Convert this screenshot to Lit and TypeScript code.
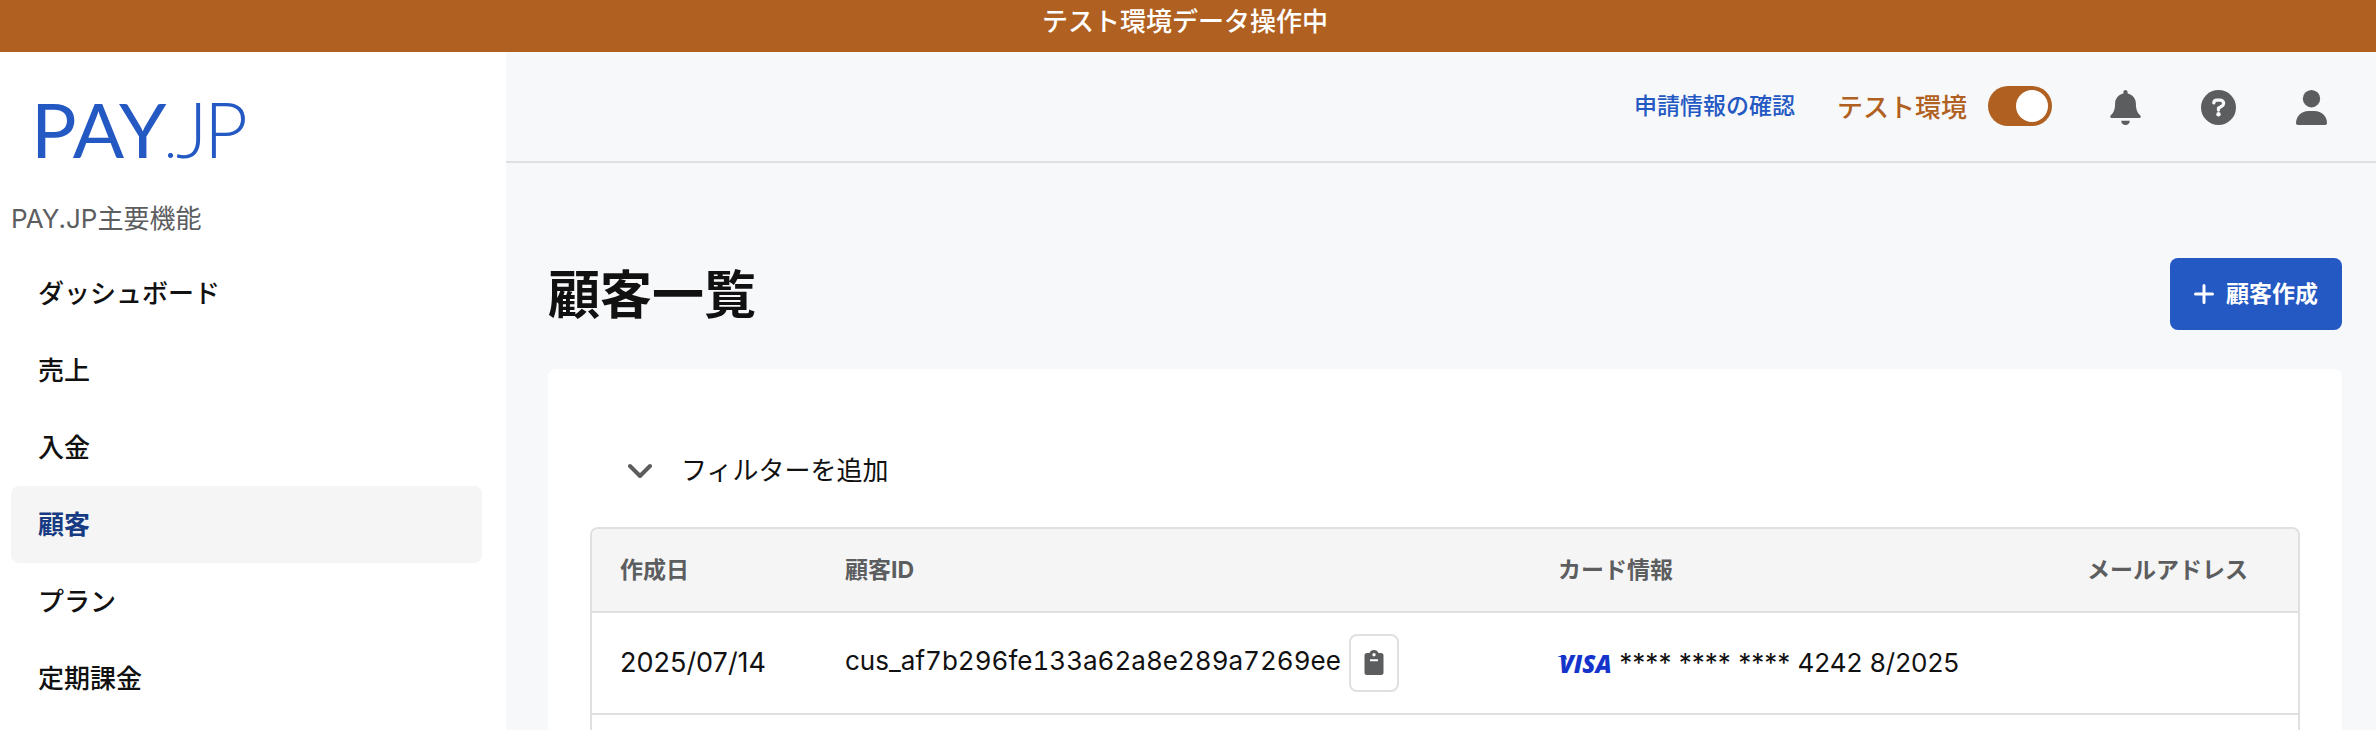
import { LitElement, html, css, svg } from "lit";
import { customElement, state } from "lit/decorators.js";
import { classMap } from "lit/directives/class-map.js";

interface Customer {
  created: string;
  id: string;
  card: string;
  email: string;
}

const NAV_ITEMS = ["ダッシュボード", "売上", "入金", "顧客", "プラン", "定期課金"];

const CUSTOMERS: Customer[] = [
  {
    created: "2025/07/14",
    id: "cus_af7b296fe133a62a8e289a7269ee",
    card: "**** **** **** 4242 8/2025",
    email: "",
  },
];

const bellIcon = svg`
  <svg class="icon" viewBox="0 0 35 35" aria-hidden="true">
    <path d="M17.5 0C16.3 0 15.4 1 15.4 2.2V3.5C10.6 4.5 7.1 8.600 7.100 13.600C7.100 19.500 5.800 22.500 2.700 25.600C1.700 26.700 2.300 28 3.700 28H31.300C32.700 28 33.300 26.700 32.300 25.600C29.200 22.500 27.900 19.500 27.900 13.600C27.900 8.600 24.400 4.500 19.600 3.500V2.200C19.600 1 18.700 0 17.500 0Z"/>
    <path d="M13.200 30.700H21.800C21.800 33.200 19.900 35 17.500 35S13.200 33.200 13.200 30.700Z"/>
  </svg>`;

const helpIcon = svg`
  <svg class="icon" viewBox="0 0 35 35" aria-hidden="true">
    <circle cx="17.500" cy="17.500" r="17.500"/>
    <path d="M12.800 12.900C12.900 11 14.300 10.200 16 10.200H18.800C21 10.200 22.600 11.500 22.600 13.300C22.600 14.800 21.700 15.700 20.500 16.400L17.500 18.200V20" fill="none" stroke="#f7f8fa" stroke-width="3.300" stroke-linecap="round" stroke-linejoin="round"/>
    <circle cx="17.500" cy="24.300" r="2.200" fill="#f7f8fa"/>
  </svg>`;

const userIcon = svg`
  <svg class="icon" viewBox="0 0 35 35" aria-hidden="true">
    <circle cx="17.500" cy="8.700" r="8.700"/>
    <path d="M14.500 20.900H20.500C27.500 20.900 33 26 33 33C33 34.200 32.200 35 31 35H4C2.800 35 2 34.200 2 33C2 26 7.500 20.900 14.500 20.900Z"/>
  </svg>`;

@customElement("app-root")
export class AppRoot extends LitElement {
  @state() private selected = "顧客";
  @state() private testMode = true;

  static styles = css`
    :host {
      --blue: #2458c3;
      --brown: #b06020;
      --gray: #5c5d5f;
      --line: #e0e0e0;
      display: flex;
      flex-direction: column;
      height: 100vh;
      overflow: hidden;
      font-family: Inter, "Noto Sans CJK JP", sans-serif;
      font-size: 26px;
      line-height: 40px;
      color: #111;
      background: #f7f8fa;
    }
    *, *::before { box-sizing: border-box; }
    button { font: inherit; color: inherit; cursor: pointer; }
    a { text-decoration: none; color: inherit; }
    .banner {
      flex: none;
      height: 52px;
      padding: 2px 6px 0 0;
      text-align: center;
      color: #fff;
      font-weight: 500;
      background: var(--brown);
    }
    .layout { flex: 1; min-height: 0; display: flex; }
    .sidebar { flex: none; width: 506px; background: #fff; padding: 28px 24px 0 11px; }
    .logo { display: block; width: 230px; height: 96px; margin-left: 20px; fill: var(--blue); font-family: Lato, sans-serif; font-size: 76px; }
    .logo .thin { font-weight: 300; }
    .logo .dot { font-size: 56px; }
    .group { margin: 23px 0 16px; font-size: 26px; font-weight: 400; color: var(--gray); }
    .nav { list-style: none; margin: 0; padding: 0; }
    .nav-link {
      display: flex;
      align-items: center;
      height: 77px;
      padding: 0 27px;
      border-radius: 8px;
      font-weight: 500;
    }
    .nav-link.active { background: #f5f5f5; color: #173b83; font-weight: 700; }
    .main { flex: 1; min-width: 0; display: flex; flex-direction: column; }
    .header {
      flex: none;
      height: 111px;
      border-bottom: 2px solid var(--line);
      display: flex;
      align-items: center;
      justify-content: flex-end;
      padding: 0 47px 2px 0;
    }
    .review { font-size: 23px; font-weight: 500; color: var(--blue); margin-right: 42px; }
    .mode { display: flex; align-items: center; gap: 21px; color: var(--brown); font-weight: 500; margin-right: 56px; }
    .mode-name { padding-top: 4px; }
    .switch {
      appearance: none;
      width: 64px;
      height: 40px;
      margin: 0;
      padding: 4px;
      border-radius: 20px;
      background: #8c8d8f;
      display: flex;
      cursor: pointer;
    }
    .switch::before { content: ""; width: 32px; height: 32px; border-radius: 50%; background: #fff; }
    .switch:checked { background: var(--brown); justify-content: flex-end; }
    .tools { display: flex; gap: 58px; padding-top: 4px; }
    .tool { display: flex; padding: 0; border: 0; background: none; }
    .icon { display: block; width: 35px; height: 35px; fill: var(--gray); }
    .content { flex: 1; min-height: 0; display: flex; flex-direction: column; padding: 95px 34px 0 42px; }
    .title-row { display: flex; align-items: center; justify-content: space-between; margin-bottom: 39px; }
    .title { margin: 0; padding-top: 4px; font-size: 52px; line-height: 68px; font-weight: 700; }
    .create {
      display: flex;
      align-items: center;
      gap: 12px;
      height: 72px;
      padding: 0 24px;
      border: 0;
      border-radius: 8px;
      background: var(--blue);
      color: #fff;
      font-size: 23px;
      font-weight: 700;
    }
    .plus { width: 20px; height: 20px; stroke: #fff; stroke-width: 3; stroke-linecap: round; }
    .card {
      flex: 1;
      min-height: 0;
      display: flex;
      flex-direction: column;
      padding: 82px 42px 0;
      background: #fff;
      border-radius: 8px 8px 0 0;
    }
    .filter {
      align-self: flex-start;
      display: flex;
      align-items: center;
      gap: 29px;
      padding: 0 38px;
      margin-bottom: 36px;
      border: 0;
      background: none;
    }
    .chevron { width: 24px; height: 16px; fill: none; stroke: var(--gray); stroke-width: 4; stroke-linecap: round; stroke-linejoin: round; }
    .frame { flex: 1; min-height: 0; overflow: hidden; border: 2px solid var(--line); border-bottom: 0; border-radius: 8px 8px 0 0; }
    .table { width: 100%; table-layout: fixed; border-collapse: separate; border-spacing: 0; }
    .col-date { width: 225px; }
    .col-card { width: 529px; }
    .col-mail { width: 239px; }
    .head {
      height: 84px;
      padding: 0 0 0 28px;
      text-align: left;
      font-size: 23px;
      font-weight: 700;
      color: var(--gray);
      background: #f5f5f5;
      border-bottom: 2px solid var(--line);
    }
    .cell { height: 102px; padding: 0 0 0 28px; border-bottom: 2px solid var(--line); white-space: nowrap; vertical-align: middle; }
    .date { font-size: 27px; }
    .id { font-variant-numeric: tabular-nums; }
    .copy {
      display: inline-flex;
      align-items: center;
      justify-content: center;
      vertical-align: middle;
      width: 50px;
      height: 58px;
      margin-left: 8px;
      padding: 0;
      border: 2px solid var(--line);
      border-radius: 8px;
      background: #fff;
    }
    .clip { width: 20px; height: 26px; fill: var(--gray); }
    .visa { width: 56px; height: 34px; margin-right: -2px; vertical-align: middle; fill: #1434cb; font-family: "Open Sans", sans-serif; font-size: 24px; font-weight: 800; font-style: italic; }
  `;

  private renderNavItem(name: string) {
    const active = name === this.selected;
    return html`<li>
      <a
        href="#"
        class=${classMap({ "nav-link": true, active })}
        aria-current=${active ? "page" : "false"}
        @click=${(e: Event) => {
          e.preventDefault();
          this.selected = name;
        }}
        >${name}</a
      >
    </li>`;
  }

  private renderRow(c: Customer) {
    return html`<tr>
      <td class="cell date">${c.created}</td>
      <td class="cell id">${c.id}<button class="copy" type="button" aria-label="コピー" @click=${() => navigator.clipboard?.writeText(c.id)}>
          <svg class="clip" viewBox="0 0 20 26" aria-hidden="true">
            <path fill-rule="evenodd" d="M3 3H5.500C6.200 1.200 7.800 0 10 0S13.800 1.200 14.500 3H17A2.500 2.500 0 0 1 19.500 5.500V22.500A2.500 2.500 0 0 1 17 25H3A2.500 2.500 0 0 1 0.500 22.500V5.500A2.500 2.500 0 0 1 3 3ZM10 3A1.700 1.700 0 1 0 10 6.400A1.700 1.700 0 1 0 10 3ZM6 9.300V11.300H14V9.300Z"/>
          </svg>
        </button></td>
      <td class="cell">
        <svg class="visa" viewBox="0 0 56 34" role="img" aria-label="VISA">
          <text x="1" y="25">VISA</text>
          <path d="M0 8H8L9 12C6.500 10 3 8.800 0 8.400Z"/>
        </svg>
        ${c.card}
      </td>
      <td class="cell">${c.email}</td>
    </tr>`;
  }

  render() {
    return html`
      <div class="banner" role="status">テスト環境データ操作中</div>
      <div class="layout">
        <aside class="sidebar">
          <a href="#" aria-label="PAY.JP">
            <svg class="logo" viewBox="0 0 230 96">
              <text y="78"><tspan x="0">PAY</tspan><tspan class="thin dot" x="133">.</tspan><tspan class="thin" x="145 173">JP</tspan></text>
            </svg>
          </a>
          <h2 class="group">PAY.JP主要機能</h2>
          <nav>
            <ul class="nav">
              ${NAV_ITEMS.map((n) => this.renderNavItem(n))}
            </ul>
          </nav>
        </aside>
        <div class="main">
          <header class="header">
            <a class="review" href="#">申請情報の確認</a>
            <label class="mode">
              <span class="mode-name">テスト環境</span>
              <input
                class="switch"
                type="checkbox"
                role="switch"
                .checked=${this.testMode}
                @change=${(e: Event) => (this.testMode = (e.target as HTMLInputElement).checked)}
              />
            </label>
            <div class="tools">
              <button class="tool" type="button" aria-label="お知らせ">${bellIcon}</button>
              <button class="tool" type="button" aria-label="ヘルプ">${helpIcon}</button>
              <button class="tool" type="button" aria-label="アカウント">${userIcon}</button>
            </div>
          </header>
          <main class="content">
            <div class="title-row">
              <h1 class="title">顧客一覧</h1>
              <button class="create" type="button">
                <svg class="plus" viewBox="0 0 20 20" aria-hidden="true"><path d="M10 1.500V18.500M1.500 10H18.500"/></svg>
                顧客作成
              </button>
            </div>
            <section class="card">
              <button class="filter" type="button" aria-expanded="false">
                <svg class="chevron" viewBox="0 0 24 16" aria-hidden="true"><path d="M2 3L12 13L22 3"/></svg>
                フィルターを追加
              </button>
              <div class="frame">
                <table class="table">
                  <colgroup>
                    <col class="col-date" />
                    <col />
                    <col class="col-card" />
                    <col class="col-mail" />
                  </colgroup>
                  <thead>
                    <tr>
                      <th class="head" scope="col">作成日</th>
                      <th class="head" scope="col">顧客ID</th>
                      <th class="head" scope="col">カード情報</th>
                      <th class="head" scope="col">メールアドレス</th>
                    </tr>
                  </thead>
                  <tbody>
                    ${CUSTOMERS.map((c) => this.renderRow(c))}
                  </tbody>
                </table>
              </div>
            </section>
          </main>
        </div>
      </div>
    `;
  }
}
